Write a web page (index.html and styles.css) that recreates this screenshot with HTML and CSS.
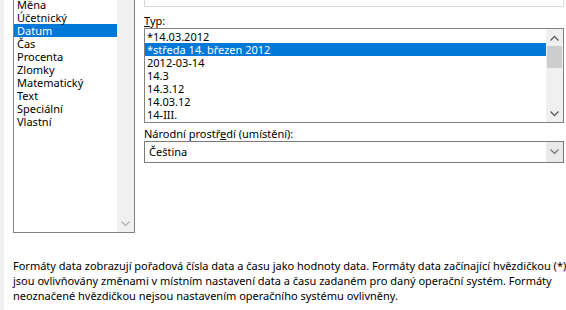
FILE: index.html
```html
<!DOCTYPE html>
<html lang="cs">
<head>
  <meta charset="UTF-8">
  <title>Formát buněk</title>
  <link rel="stylesheet" href="styles.css">
</head>
<body>

  <div class="dialog">
    <div class="edge"></div>

    <div class="page">
      <div class="top">

        <!-- Druh (kategorie) -->
        <div class="category-list">
          <ul class="items">
            <li>Měna</li>
            <li>Účetnický</li>
            <li class="selected">Datum</li>
            <li>Čas</li>
            <li>Procenta</li>
            <li>Zlomky</li>
            <li>Matematický</li>
            <li>Text</li>
            <li>Speciální</li>
            <li>Vlastní</li>
          </ul>
          <div class="vscroll">
            <span class="spacer"></span>
            <span class="arrow">
              <svg width="9" height="6" viewBox="0 0 9 6"><polyline points="0.5,0.5 4.5,4.5 8.5,0.5" fill="none" stroke="#b4b4b4" stroke-width="1.4"/></svg>
            </span>
          </div>
        </div>

        <div class="format-panel">
          <div class="sample"></div>

          <div class="field-label"><u>T</u>yp:</div>
          <div class="type-list">
            <ul class="items">
              <li>*14.03.2012</li>
              <li class="selected">*středa 14. březen 2012</li>
              <li>2012-03-14</li>
              <li>14.3</li>
              <li>14.3.12</li>
              <li>14.03.12</li>
              <li>14-III.</li>
            </ul>
            <div class="vscroll">
              <span class="arrow">
                <svg width="9" height="6" viewBox="0 0 9 6"><polyline points="0.5,5.5 4.5,1.5 8.5,5.5" fill="none" stroke="#606060" stroke-width="1.4"/></svg>
              </span>
              <span class="thumb"></span>
              <span class="spacer"></span>
              <span class="arrow">
                <svg width="9" height="6" viewBox="0 0 9 6"><polyline points="0.5,0.5 4.5,4.5 8.5,0.5" fill="none" stroke="#606060" stroke-width="1.4"/></svg>
              </span>
            </div>
          </div>

          <div class="field-label locale-label">Národní prostř<u>e</u>dí (umístění):</div>
          <div class="combo">
            <span class="combo-value">Čeština</span>
            <span class="combo-btn">
              <svg width="9" height="6" viewBox="0 0 9 6"><polyline points="0.5,0.5 4.5,4.5 8.5,0.5" fill="none" stroke="#707070" stroke-width="1.1"/></svg>
            </span>
          </div>
        </div>

      </div>

      <p class="description">
        Formáty data zobrazují pořadová čísla data a času jako hodnoty data. Formáty data začínající hvězdičkou (*)<br>
        jsou ovlivňovány změnami v místním nastavení data a času zadaném pro daný operační systém. Formáty<br>
        neoznačené hvězdičkou nejsou nastavením operačního systému ovlivněny.
      </p>
    </div>
  </div>

</body>
</html>
```

FILE: styles.css
```css
* {
  box-sizing: border-box;
  margin: 0;
  padding: 0;
}

body {
  background: #fff;
  color: #000;
  font-family: 'Noto Sans', 'Open Sans', sans-serif;
  font-size: 11px;
  overflow: hidden;
}

.dialog {
  display: flex;
  width: 566px;
  height: 310px;
}

/* light frame on the left */
.edge {
  flex-shrink: 0;
  width: 4px;
  background: #f0f0f0;
}

.page {
  flex: 1;
  min-width: 0;
  padding-left: 9px;
}

.top {
  display: flex;
  gap: 9px;
}

ul {
  list-style: none;
}

.items li {
  height: 13px;
  line-height: 13px;
  white-space: nowrap;
}

.items li.selected {
  background: #0078d7;
  color: #fff;
}

/* Category list */
.category-list {
  display: flex;
  flex-shrink: 0;
  width: 122px;
  height: 233px;
  border: 1px solid #828282;
  border-top: none;
  overflow: hidden;
}

.category-list .items {
  flex: 1;
  margin-top: -2px;
}

.category-list .items li {
  padding-left: 3px;
}

.vscroll {
  display: flex;
  flex-direction: column;
  width: 17px;
  background: #f0f0f0;
}

.vscroll .arrow {
  display: flex;
  align-items: center;
  justify-content: center;
  height: 17px;
}

.vscroll .spacer {
  flex: 1;
}

.vscroll .thumb {
  height: 22px;
  margin: 0 1px;
  background: #cdcdcd;
}

/* Right panel */
.format-panel {
  flex-shrink: 0;
  width: 420px;
}

.sample {
  height: 7px;
  border: 1px solid #d9d9d9;
  border-top: none;
}

.field-label {
  margin-top: 6px;
  line-height: 15px;
}

.type-list {
  display: flex;
  height: 95px;
  border: 1px solid #828282;
}

.type-list .items {
  flex: 1;
  padding-top: 1px;
}

.type-list .items li {
  padding-left: 2px;
}

.locale-label {
  margin-top: 3px;
}

.combo {
  display: flex;
  align-items: stretch;
  height: 22px;
  border: 1px solid #7a7a7a;
}

.combo-value {
  flex: 1;
  padding-left: 4px;
  line-height: 20px;
}

.combo-btn {
  display: flex;
  align-items: center;
  justify-content: center;
  width: 17px;
  background: #e9e9e9;
}

.description {
  margin-top: 25px;
  line-height: 15px;
  white-space: nowrap;
}
```
